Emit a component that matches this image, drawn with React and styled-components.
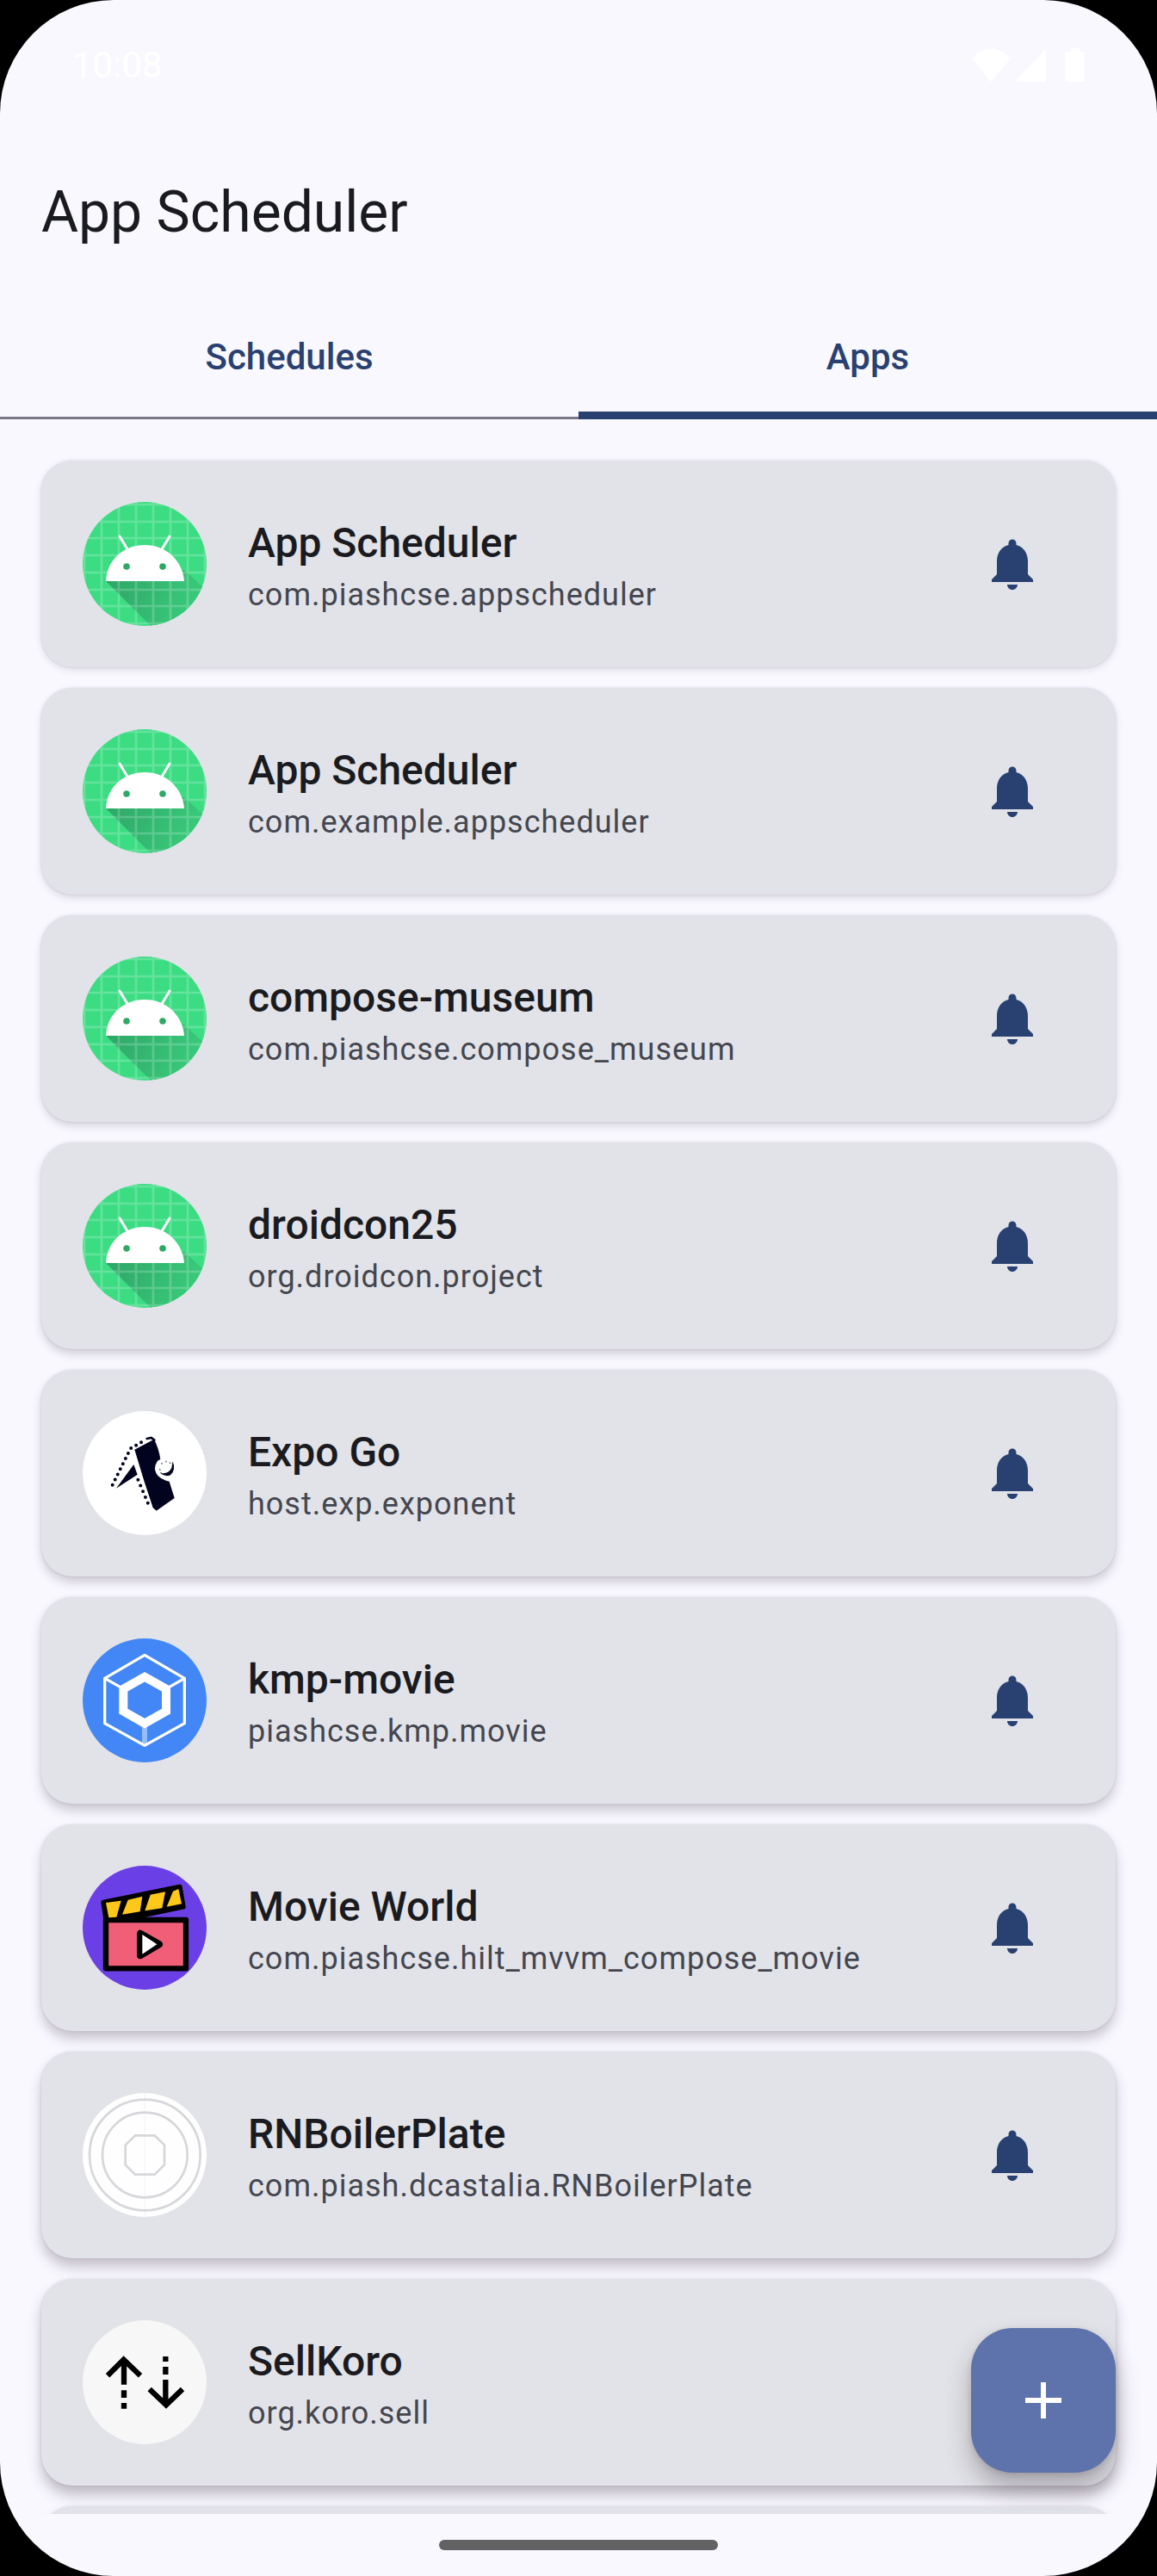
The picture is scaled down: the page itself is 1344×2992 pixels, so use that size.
import React from "react";
import styled, { createGlobalStyle } from "styled-components";

const GlobalStyle = createGlobalStyle`
  *, *::before, *::after { box-sizing: border-box; }
  body { margin: 0; background: #000; font-family: Roboto, "Noto Sans", sans-serif; }
  h1, h2, p, ul { margin: 0; padding: 0; font-weight: 400; }
`;

const Screen = styled.div`
  position: relative;
  display: flex;
  flex-direction: column;
  height: 100vh;
  overflow: hidden;
  border-radius: 132px;
  background: #f9f8ff;
  color: #1a1b20;
`;

const StatusBar = styled.div`
  flex: none;
  display: flex;
  align-items: center;
  justify-content: space-between;
  height: 151px;
  padding: 0 84px;
  color: #fff;
  font-size: 42px;
  line-height: 48px;
`;

const StatusIcons = styled.svg`
  width: 132px;
  height: 40px;
  fill: currentColor;
`;

const TopBar = styled.header`
  flex: none;
  display: flex;
  align-items: center;
  height: 192px;
  padding: 0 48px;
`;

const Title = styled.h1`
  font-size: 66px;
  line-height: 84px;
`;

const Tabs = styled.div`
  flex: none;
  display: flex;
  height: 144px;
`;

const Tab = styled.button`
  flex: 1;
  padding: 0;
  border: 0;
  background: transparent;
  box-shadow: inset 0 ${(p) => (p.$selected ? "-9px #294171" : "-3px #7b7784")};
  color: #294171;
  font-family: inherit;
  font-size: 42px;
  font-weight: 500;
  line-height: 60px;
`;

const List = styled.ul`
  flex: 1;
  min-height: 0;
  display: flex;
  flex-direction: column;
  gap: 24px;
  padding: 48px 48px 0;
  overflow: hidden;
  list-style: none;
`;

const Card = styled.li`
  flex: none;
  display: flex;
  align-items: center;
  gap: 48px;
  height: 240px;
  padding: 48px;
  border-radius: 36px;
  background: #e2e3e8;
  box-shadow:
    0 0 3px rgba(60, 45, 60, 0.14),
    0 ${(p) => 3 + p.$depth}px ${(p) => 8 + p.$depth}px rgba(60, 45, 60, ${(p) => (14 + 2 * p.$depth) / 100});
`;

const AppIcon = styled.svg`
  flex: none;
  width: 144px;
  height: 144px;
  border-radius: 50%;
`;

const AppText = styled.div`
  flex: 1;
  min-width: 0;
`;

const AppName = styled.h2`
  font-size: 48px;
  font-weight: 500;
  line-height: 72px;
`;

const AppPackage = styled.p`
  color: #44464f;
  font-size: 36px;
  line-height: 48px;
  letter-spacing: 1px;
`;

const IconButton = styled.button`
  flex: none;
  display: grid;
  place-items: center;
  width: 144px;
  height: 144px;
  padding: 0;
  border: 0;
  background: transparent;
  color: #294171;
`;

const Glyph = styled.svg`
  width: 72px;
  height: 72px;
  fill: currentColor;
`;

const Fab = styled.button`
  position: absolute;
  right: 48px;
  bottom: 120px;
  display: grid;
  place-items: center;
  width: 168px;
  height: 168px;
  padding: 0;
  border: 0;
  border-radius: 48px;
  background: #5e73ab;
  color: #fff;
  box-shadow:
    0 2px 6px rgba(40, 30, 40, 0.14),
    0 18px 30px rgba(40, 30, 40, 0.3);
`;

const NavBar = styled.div`
  flex: none;
  display: flex;
  justify-content: center;
  height: 72px;
  padding-top: 30px;
`;

const Handle = styled.div`
  width: 324px;
  height: 12px;
  border-radius: 6px;
  background: #626264;
`;

function AndroidArt({ id }) {
  return (
    <AppIcon viewBox="0 0 144 144" aria-hidden="true">
      <defs>
        <linearGradient id={id} x1="30" y1="90" x2="130" y2="140" gradientUnits="userSpaceOnUse">
          <stop offset="0" stopColor="#2fa767" />
          <stop offset="1" stopColor="#3bcd7d" />
        </linearGradient>
      </defs>
      <rect width="144" height="144" fill="#3ddc84" />
      <path d="M27 92L79 144H144V103L118 79Z" fill={`url(#${id})`} />
      <path
        d="M2 0V144M22 0V144M42 0V144M62 0V144M82 0V144M102 0V144M122 0V144M142 0V144M0 3H144M0 23H144M0 42H144M0 62H144M0 82H144M0 102H144M0 121H144M0 141H144"
        stroke="#fff"
        strokeWidth="2.6"
        opacity="0.2"
      />
      <path d="M27 92C28 68 47 50 72 50S116 68 118 92Z" fill="#fff" />
      <path d="M43 40L52 55M101 40L92 55" stroke="#fff" strokeWidth="3" strokeLinecap="round" />
      <circle cx="51" cy="75" r="3.8" fill="#2fa866" />
      <circle cx="93" cy="75" r="3.8" fill="#2fa866" />
    </AppIcon>
  );
}

function ExpoArt() {
  return (
    <AppIcon viewBox="48 57 432 432" aria-hidden="true">
      <rect x="48" y="57" width="432" height="432" fill="#fff" />
      <g fill="#02031e">
        <path d="M229 191L297 155Q314 188 319 225Q302 230 300 257Q302 290 350 302L368 360L305 404L293 394L262 300Z" />
        <path d="M226 243L239 278L165 326Z" />
        <path d="M362 232Q374 262 354 280Q335 288 318 272Q345 279 358 255Z" />
      </g>
      <g fill="none" stroke="#02031e" strokeWidth="12" strokeLinecap="round">
        <path d="M152 314L215 187L262 160" strokeDasharray="0 20.5" />
        <path d="M241 296L280 388" strokeDasharray="0 22" />
        <path d="M272 153L287 150L298 158" strokeWidth="8" />
        <path d="M323 240L340 232L358 240" strokeWidth="5" strokeDasharray="2 14" opacity="0.5" />
        <path d="M317 260L322 275" strokeWidth="5" strokeDasharray="2 10" opacity="0.5" />
      </g>
    </AppIcon>
  );
}

function HexArt() {
  return (
    <AppIcon viewBox="48 39 432 432" aria-hidden="true">
      <rect x="48" y="39" width="432" height="432" fill="#4287f5" />
      <g fill="none" stroke="#fff">
        <path d="M264 97L403 178V335L264 412L125 335V178Z" strokeWidth="10" strokeLinejoin="round" />
        <path d="M125 178L185 212M403 178L344 212" strokeWidth="10" />
        <path d="M264 345V410" strokeWidth="18" opacity="0.45" />
        <path d="M264 173L339 215V293L264 335L190 293V215Z" strokeWidth="30" />
      </g>
    </AppIcon>
  );
}

function MovieArt() {
  return (
    <AppIcon viewBox="48 51 432 432" aria-hidden="true">
      <rect x="48" y="51" width="432" height="432" fill="#6b3fe6" />
      <g stroke="#000" strokeLinejoin="round">
        <path d="M121 179L386 125L398 194L262 222L130 238Z" strokeWidth="18" fill="#000" />
        <path d="M129 240H408V409H129Z" strokeWidth="19" fill="#f05e78" />
        <path d="M249 287V364L315 325Z" strokeWidth="24" fill="#000" />
      </g>
      <path d="M256 291V359L307 325Z" fill="#fff" />
      <g fill="#fdc81a">
        <path d="M129 180L182 173L166 230L139 232Z" />
        <path d="M206 170L256 158L248 211L186 221Z" />
        <path d="M284 152L336 142L325 199L265 208Z" />
        <path d="M363 140L382 132L393 184L341 194Z" />
      </g>
    </AppIcon>
  );
}

function RingsArt() {
  return (
    <AppIcon viewBox="48 63 432 432" aria-hidden="true">
      <rect x="48" y="63" width="432" height="432" fill="#fefefe" />
      <g fill="none" stroke="#d6d6db" strokeWidth="8">
        <circle cx="265" cy="279" r="193" />
        <circle cx="265" cy="279" r="148" />
        <path d="M231 211H299L333 245V313L299 347H231L197 313V245Z" />
        <path d="M265 63V495" strokeWidth="4" opacity="0.2" />
      </g>
    </AppIcon>
  );
}

function ArrowsArt() {
  return (
    <AppIcon viewBox="48 45 432 432" aria-hidden="true">
      <rect x="48" y="45" width="432" height="432" fill="#f7f7f7" />
      <g fill="none" stroke="#000" strokeWidth="19">
        <path d="M192 180V269M192 289V315M192 333V353" />
        <path d="M135 238L191 182L249 238" />
        <path d="M337 340V252M337 234V207M337 189V171" />
        <path d="M281 285L339 340L396 285" />
      </g>
    </AppIcon>
  );
}

const APPS = [
  { name: "App Scheduler", pkg: "com.piashcse.appscheduler", Art: AndroidArt },
  { name: "App Scheduler", pkg: "com.example.appscheduler", Art: AndroidArt },
  { name: "compose-museum", pkg: "com.piashcse.compose_museum", Art: AndroidArt },
  { name: "droidcon25", pkg: "org.droidcon.project", Art: AndroidArt },
  { name: "Expo Go", pkg: "host.exp.exponent", Art: ExpoArt },
  { name: "kmp-movie", pkg: "piashcse.kmp.movie", Art: HexArt },
  { name: "Movie World", pkg: "com.piashcse.hilt_mvvm_compose_movie", Art: MovieArt },
  { name: "RNBoilerPlate", pkg: "com.piash.dcastalia.RNBoilerPlate", Art: RingsArt },
  { name: "SellKoro", pkg: "org.koro.sell", Art: ArrowsArt },
];

function AppCard({ app, index }) {
  const { name, pkg, Art } = app;
  return (
    <Card $depth={index}>
      <Art id={`shade-${index}`} />
      <AppText>
        <AppName>{name}</AppName>
        <AppPackage>{pkg}</AppPackage>
      </AppText>
      <IconButton type="button" aria-label="Schedule">
        <Glyph viewBox="0 0 24 24" aria-hidden="true">
          <path d="M12 22c1.1 0 2-.9 2-2h-4c0 1.1.89 2 2 2zM18 16v-5c0-3.07-1.64-5.64-4.5-6.32V4c0-.83-.67-1.5-1.5-1.5s-1.5.67-1.5 1.5v.68C7.63 5.36 6 7.92 6 11v5l-2 2v1h16v-1l-2-2z" />
        </Glyph>
      </IconButton>
    </Card>
  );
}

export default function App() {
  return (
    <>
      <GlobalStyle />
      <Screen>
        <StatusBar>
          <span>10:08</span>
          <StatusIcons viewBox="0 0 132 40" aria-hidden="true">
            <path d="M1 12Q10 1 23 1T46 12L23 39Z" />
            <path d="M50 39L87 1V39Z" />
            <path d="M116 0H126V4H129Q132 4 132 7V36Q132 39 129 39H112Q109 39 109 36V7Q109 4 112 4H116Z" />
          </StatusIcons>
        </StatusBar>
        <TopBar>
          <Title>App Scheduler</Title>
        </TopBar>
        <Tabs role="tablist">
          <Tab type="button" role="tab" aria-selected="false">Schedules</Tab>
          <Tab type="button" role="tab" aria-selected="true" $selected>Apps</Tab>
        </Tabs>
        <List>
          {APPS.map((app, index) => (
            <AppCard key={app.pkg} app={app} index={index} />
          ))}
          <Card $depth={9} />
        </List>
        <NavBar>
          <Handle />
        </NavBar>
        <Fab type="button" aria-label="Add schedule">
          <Glyph viewBox="0 0 24 24" aria-hidden="true">
            <path d="M19 13h-6v6h-2v-6H5v-2h6V5h2v6h6v2z" />
          </Glyph>
        </Fab>
      </Screen>
    </>
  );
}
